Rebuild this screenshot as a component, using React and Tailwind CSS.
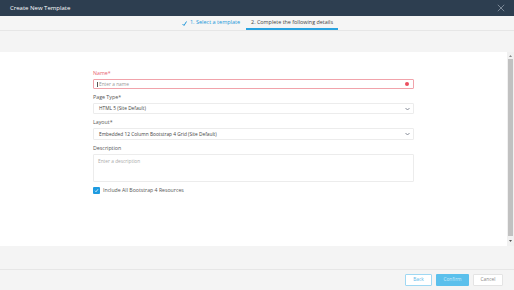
import React from "react";

const font = { fontFamily: '"Open Sans", "Liberation Sans", sans-serif' };

function Chevron() {
  return (
    <svg width="5" height="4" viewBox="0 0 10 6" className="text-gray-500">
      <path d="M1 1l4 4 4-4" fill="none" stroke="currentColor" strokeWidth="1.6" />
    </svg>
  );
}

function Field({ label, required, error, children }) {
  return (
    <div className="flex flex-col gap-[2px]">
      <label className={`block text-[5.3px] leading-[7px] ${error ? "text-[#e8636f]" : "text-[#555]"}`}>
        {label}
        {required && "*"}
      </label>
      {children}
    </div>
  );
}

export default function App() {
  return (
    <div className="w-[514px] h-[290px] flex flex-col bg-[#f4f4f4] overflow-hidden leading-none" style={font}>
      {/* Header */}
      <div className="h-[16px] shrink-0 bg-[#2d3e50] flex items-center justify-between pl-[10px] pr-[9px]">
        <span className="text-white text-[6px]">Create New Template</span>
        <svg width="8" height="8" viewBox="0 0 10 10">
          <path d="M1 1l8 8M9 1l-8 8" stroke="#9aa6b2" strokeWidth="0.9" />
        </svg>
      </div>

      {/* Steps */}
      <div className="h-[15px] shrink-0 bg-[#f5f5f5] border-b border-[#e6e6e6] flex justify-center items-stretch gap-[6px] pl-[6px]">
        <div className="flex items-center gap-[3px] text-[#2196d9] text-[5.5px]">
          <svg width="5" height="5" viewBox="0 0 10 10">
            <path d="M1 6l3 3 5-8" fill="none" stroke="#2196d9" strokeWidth="2" />
          </svg>
          <span>1. Select a template</span>
        </div>
        <div className="flex items-center px-[5px] text-[#444] text-[5.4px] border-b-[2px] border-[#29a3e0] pt-[2px]">
          2. Complete the following details
        </div>
      </div>

      <div className="h-[21px] shrink-0" />

      {/* Body */}
      <div className="h-[194px] shrink-0 bg-white flex">
        <div className="flex-1 flex justify-center pt-[18px]">
          <div className="w-[321px] flex flex-col gap-[5px]">
            <Field label="Name" required error>
              <div className="h-[10px] border border-[#f1a3ab] rounded-[1px] flex items-center pl-[3px] pr-[4px] justify-between">
                <div className="flex items-center gap-[1px]">
                  <span className="w-px h-[5px] bg-[#555]" />
                  <span className="text-[4.8px] text-[#999]">Enter a name</span>
                </div>
                <span className="w-[4px] h-[4px] rounded-full bg-[#ec4f5f]" />
              </div>
            </Field>
            <Field label="Page Type" required>
              <div className="h-[11px] border border-[#ececec] rounded-[1px] flex items-center justify-between pl-[5px] pr-[3px]">
                <span className="text-[4.8px] text-[#444]">HTML 5 (Site Default)</span>
                <Chevron />
              </div>
            </Field>
            <Field label="Layout" required>
              <div className="h-[12px] border border-[#ececec] rounded-[1px] flex items-center justify-between pl-[5px] pr-[3px]">
                <span className="text-[4.8px] text-[#444]">Embedded 12 Column Bootstrap 4 Grid (Site Default)</span>
                <Chevron />
              </div>
            </Field>
            <Field label="Description">
              <div className="h-[28px] border border-[#ececec] rounded-[1px] px-[4px] pt-[3px]">
                <span className="block text-[4.8px] leading-[6px] text-[#aaa]">Enter a description</span>
              </div>
            </Field>
            <div className="flex items-center gap-[3px]">
              <span className="w-[7px] h-[7px] bg-[#1e9be0] rounded-[1px] flex items-center justify-center">
                <svg width="5" height="5" viewBox="0 0 10 10">
                  <path d="M2 5.5l2 2 4-5" fill="none" stroke="white" strokeWidth="1.5" />
                </svg>
              </span>
              <span className="text-[5.2px] text-[#555]">Include All Bootstrap 4 Resources</span>
            </div>
          </div>
        </div>
        {/* Scrollbar */}
        <div className="w-[7px] bg-[#f1f1f1] flex flex-col items-center">
          <div className="h-[7px] flex items-center justify-center">
            <svg width="3" height="2" viewBox="0 0 6 4"><path d="M0 4L3 0l3 4z" fill="#888" /></svg>
          </div>
          <div className="flex-1 w-[5px] bg-[#c1c1c1]" />
          <div className="h-[10px] flex items-center justify-center">
            <svg width="3" height="2" viewBox="0 0 6 4"><path d="M0 0l3 4 3-4z" fill="#555" /></svg>
          </div>
        </div>
      </div>

      <div className="h-[23px] shrink-0" />

      {/* Footer */}
      <div className="flex-1 border-t border-[#e6e6e6] flex items-center justify-end gap-[4px] pr-[11px] pb-[1px]">
        <button className="w-[27px] h-[12px] bg-white border border-[#9fd8f3] rounded-[1px] text-[4.8px] text-[#5bb8e8]">Back</button>
        <button className="w-[33px] h-[12px] bg-[#5bc0ec] rounded-[1px] text-[4.8px] text-[#cdeaf8]">Confirm</button>
        <button className="w-[30px] h-[12px] bg-white border border-[#e4e4e4] rounded-[1px] text-[4.8px] text-[#888]">Cancel</button>
      </div>
    </div>
  );
}
